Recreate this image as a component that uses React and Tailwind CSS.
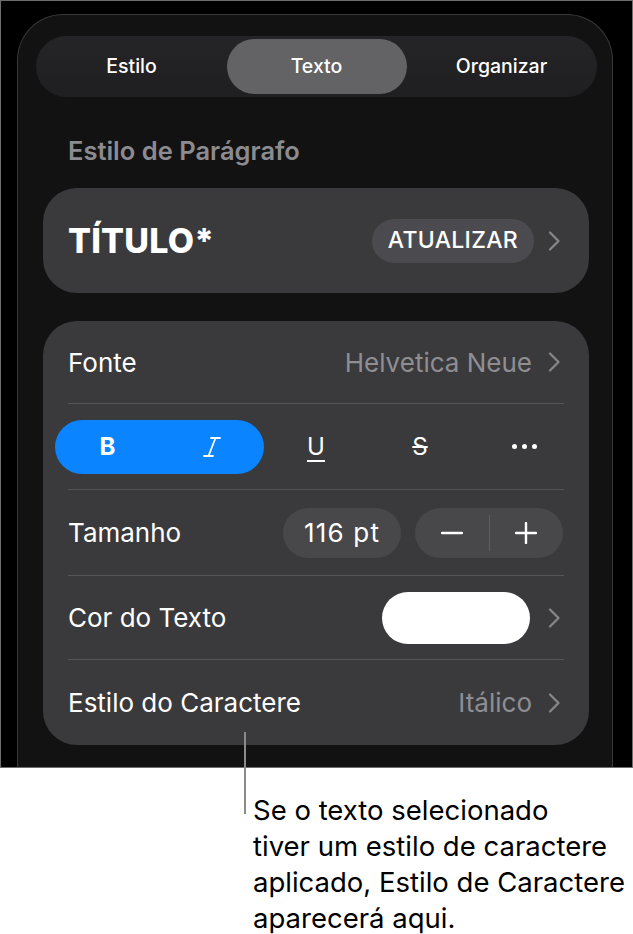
import React from "react";

function Chevron() {
  return (
    <svg width="13" height="22" viewBox="0 0 13 22" className="shrink-0">
      <path d="M2 2.5 L10.5 11 L2 19.5" fill="none" stroke="#85858a" strokeWidth="2.3" strokeLinecap="round" strokeLinejoin="round" />
    </svg>
  );
}

function Divider() {
  return <div className="mx-[25px] h-px bg-[#545458]" />;
}

export default function App() {
  return (
    <div className="relative w-[633px] h-[934px] bg-white overflow-hidden font-['Inter','Liberation_Sans',sans-serif]">
      <div className="h-[768px] bg-black border border-[#6e6e6e] pt-[13px] pl-[16px] pr-[19px] overflow-hidden">
        <div className="h-[800px] rounded-t-[46px] border border-b-0 border-[#38383a] bg-[#121213] pt-[21px]">
          {/* Segmented control */}
          <div className="ml-[18px] w-[561px] h-[61px] rounded-full bg-gradient-to-b from-[#252527] to-[#1f1f21] p-[3px] flex">
            <div className="flex-1 flex items-center justify-center text-white text-[19.5px] font-medium">Estilo</div>
            <div className="flex-1 flex items-center justify-center">
              <div className="w-[180px] h-[55px] rounded-full bg-[#636366] flex items-center justify-center text-white text-[19.5px] font-medium">Texto</div>
            </div>
            <div className="flex-1 flex items-center justify-center text-white text-[19.5px] font-medium">Organizar</div>
          </div>

          {/* Section label */}
          <div className="h-[91px] pl-[50px] pt-[39px]">
            <div className="text-[25.5px] leading-[30px] font-semibold text-[#8b8b90]">Estilo de Parágrafo</div>
          </div>

          {/* Title card */}
          <div className="ml-[25px] w-[546px] h-[105px] rounded-[34px] bg-[#3a3a3c] flex items-center pl-[25px] pr-[28px]">
            <div className="text-white text-[34px] font-extrabold tracking-[0.2px]">TÍTULO*</div>
            <div className="ml-auto h-[44px] px-[16px] rounded-full bg-[#4b4b4f] flex items-center text-white text-[23px] font-medium tracking-[0.3px]">ATUALIZAR</div>
            <div className="ml-[14px]"><Chevron /></div>
          </div>

          {/* Main card */}
          <div className="mt-[28px] ml-[25px] w-[546px] h-[424px] rounded-[34px] bg-[#3a3a3c] flex flex-col">
            <div className="h-[82px] flex items-center pl-[25px] pr-[28px]">
              <div className="text-white text-[26px]">Fonte</div>
              <div className="ml-auto text-[#8e8e93] text-[26px]">Helvetica Neue</div>
              <div className="ml-[16px]"><Chevron /></div>
            </div>
            <Divider />
            <div className="h-[85px] flex items-center pl-[12px]">
              <div className="w-[209px] h-[54px] rounded-full bg-[#0a84ff] flex">
                <div className="w-[105px] flex items-center justify-center text-white text-[24px] font-bold">B</div>
                <div className="w-[104px] flex items-center justify-center">
                  <svg width="18" height="22" viewBox="0 0 18 22">
                    <path d="M8 2 H17 M1 20 H10 M12.5 2 L5.5 20" fill="none" stroke="white" strokeWidth="1.8" strokeLinecap="round" />
                  </svg>
                </div>
              </div>
              <div className="w-[104px] flex items-center justify-center text-white text-[24px] underline decoration-[1.5px] underline-offset-[5px]">U</div>
              <div className="w-[104px] flex items-center justify-center text-white text-[24px] line-through decoration-[1.5px]">S</div>
              <div className="w-[104px] flex items-center justify-center gap-[5px]">
                <div className="w-[5px] h-[5px] rounded-full bg-white" />
                <div className="w-[5px] h-[5px] rounded-full bg-white" />
                <div className="w-[5px] h-[5px] rounded-full bg-white" />
              </div>
            </div>
            <Divider />
            <div className="h-[85px] flex items-center pl-[25px] pr-[26px]">
              <div className="text-white text-[26px]">Tamanho</div>
              <div className="ml-auto w-[118px] h-[50px] rounded-full bg-[#48484b] flex items-center justify-center text-white text-[26px] tracking-[1.2px]">116 pt</div>
              <div className="ml-[14px] w-[148px] h-[50px] rounded-full bg-[#48484b] flex items-center">
                <div className="flex-1 flex items-center justify-center">
                  <svg width="22" height="4" viewBox="0 0 22 4"><path d="M1 2 H21" stroke="white" strokeWidth="2.4" strokeLinecap="round" /></svg>
                </div>
                <div className="w-px h-[36px] bg-[#5e5e62]" />
                <div className="flex-1 flex items-center justify-center">
                  <svg width="22" height="22" viewBox="0 0 22 22"><path d="M1 11 H21 M11 1 V21" stroke="white" strokeWidth="2.4" strokeLinecap="round" /></svg>
                </div>
              </div>
            </div>
            <Divider />
            <div className="h-[83px] flex items-center pl-[25px] pr-[28px]">
              <div className="text-white text-[26px]">Cor do Texto</div>
              <div className="ml-auto w-[148px] h-[52px] rounded-full bg-white" />
              <div className="ml-[18px]"><Chevron /></div>
            </div>
            <Divider />
            <div className="h-[85px] flex items-center pl-[25px] pr-[28px]">
              <div className="text-white text-[26px]">Estilo do Caractere</div>
              <div className="ml-auto text-[#8e8e93] text-[26px]">Itálico</div>
              <div className="ml-[16px]"><Chevron /></div>
            </div>
          </div>
        </div>
      </div>

      {/* Callout line */}
      <div className="absolute left-[244px] top-[732px] w-[2px] h-[82px] bg-[#8a8a8a]" />

      {/* Callout text */}
      <div className="ml-[253px] mt-[24px] text-black text-[27.5px] leading-[36px] whitespace-nowrap">
        Se o texto selecionado<br />
        tiver um estilo de caractere<br />
        aplicado, Estilo de Caractere<br />
        aparecerá aqui.
      </div>
    </div>
  );
}
